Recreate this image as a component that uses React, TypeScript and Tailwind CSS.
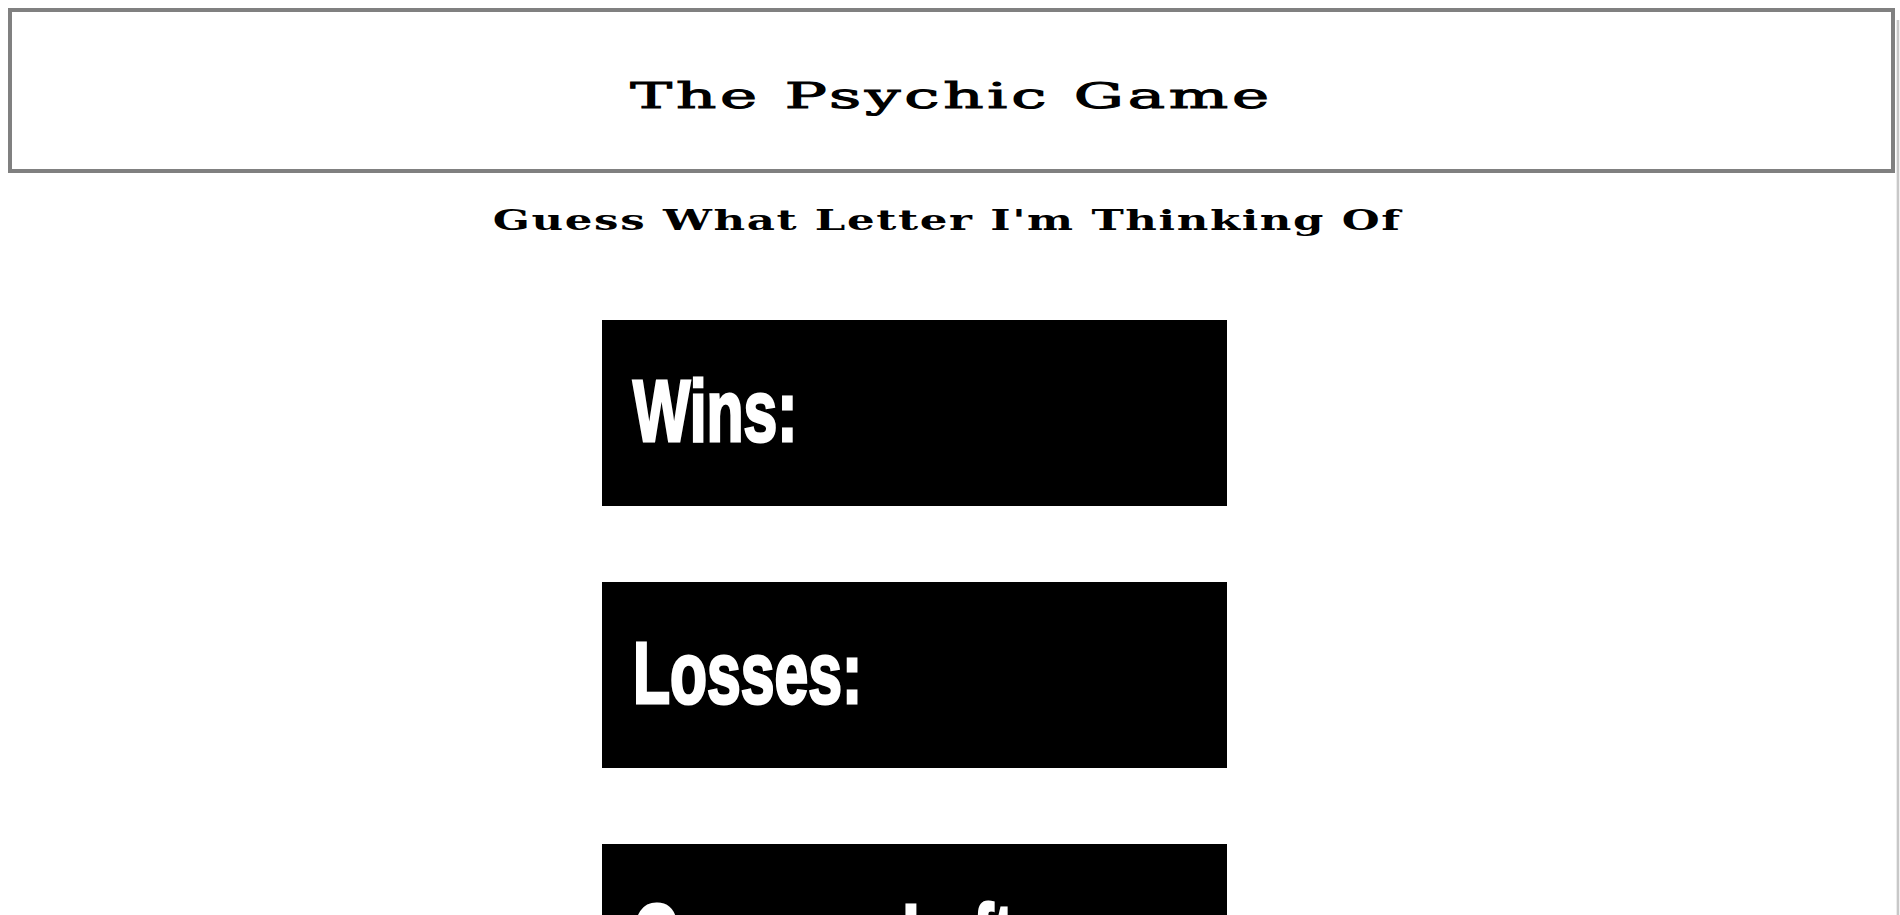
import React from "react";

const serif = "font-['DejaVu_Serif','Liberation_Serif',serif]";

function StatBox({ label }: { label: string }) {
  return (
    <div className="h-[186px] w-[625px] bg-black pl-[31px] pt-[48px] overflow-hidden">
      <div
        className="inline-block origin-left scale-x-[0.7] whitespace-nowrap font-['Liberation_Sans',Arial,sans-serif] text-[86.6px] font-bold leading-[86.6px] text-white [-webkit-text-stroke:3px_white]"
      >
        {label}
      </div>
    </div>
  );
}

export default function App() {
  return (
    <div className="relative min-h-[915px] bg-white text-black">
      <header className="ml-[8px] mr-[5px] mt-[8px] box-border h-[165px] border-4 border-[#808080] pt-[66px] text-center">
        <h1
          className={`${serif} inline-block scale-x-[1.74] whitespace-nowrap text-[36px] font-normal leading-[36px] tracking-[2.2px] [-webkit-text-stroke:1px_black]`}
        >
          The Psychic Game
        </h1>
      </header>

      <div className="ml-[8px] mr-[13px] pt-[34px] text-center">
        <h2
          className={`${serif} inline-block scale-x-[1.61] whitespace-nowrap text-[27px] font-bold leading-[27px] tracking-[1px]`}
        >
          Guess What Letter I'm Thinking Of
        </h2>
      </div>

      <main className="ml-[602px] mt-[84px] flex flex-col gap-[76px] pb-10">
        <StatBox label="Wins:" />
        <StatBox label="Losses:" />
        <StatBox label="Guesses Left:" />
      </main>

      <div className="pointer-events-none fixed right-0 top-[20px] bottom-0 flex w-[4px]">
        <div className="w-[1px] bg-[#ececec]" />
        <div className="w-[2px] bg-[#c8c8c8]" />
        <div className="w-[1px] bg-[#f1f1f1]" />
      </div>
    </div>
  );
}
